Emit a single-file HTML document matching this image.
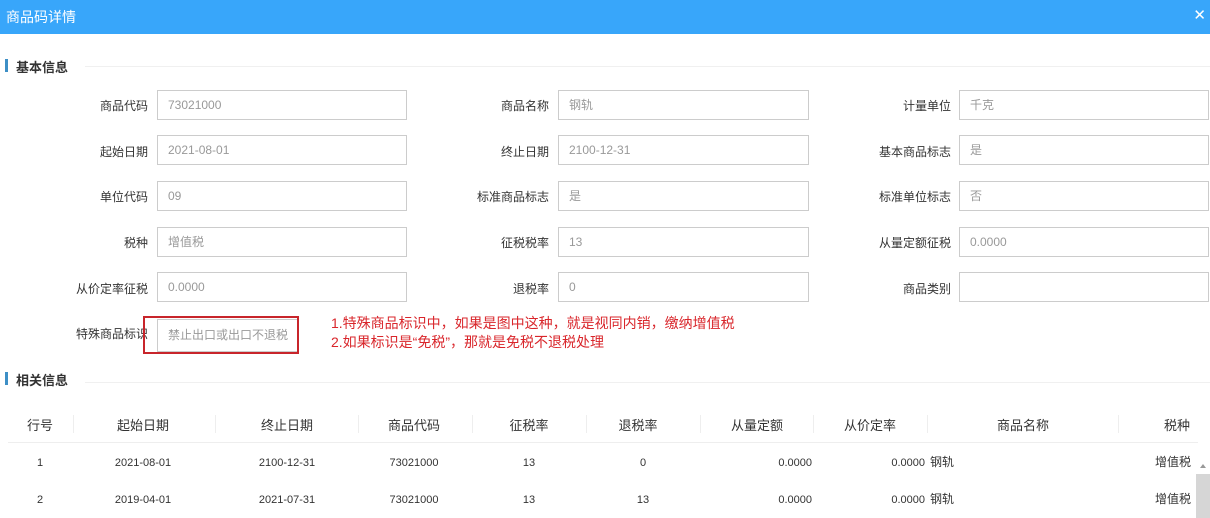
<!DOCTYPE html>
<html><head><meta charset="utf-8"><style>
*{margin:0;padding:0;box-sizing:border-box}
body{width:1210px;height:518px;overflow:hidden;background:#fff;font-family:"Liberation Sans","Noto Sans CJK SC",sans-serif;position:relative;color:#333}
.top{position:absolute;left:0;top:0;width:1210px;height:34px;background:#38a6fa}
.top .t{position:absolute;left:6px;top:7px;color:#fff;font-size:14px}
.top .x{position:absolute;right:4px;top:6px;color:#fff;font-size:15px}
.sec{position:absolute;left:5px;font-size:13px;font-weight:bold;color:#333}
.sec:before{content:"";position:absolute;left:0;top:2px;width:3px;height:13px;background:#3d8fc6}
.sec span{margin-left:11px}
.hl{position:absolute;left:85px;right:0;height:1px;background:#f0f0f0}
.lb{position:absolute;font-size:12px;color:#333;text-align:right;width:140px}
.in{position:absolute;height:30px;border:1px solid #ccc;font-size:12px;color:#999;padding-left:10px;line-height:28px}
.th{position:absolute;top:415px;font-size:13px;color:#333;text-align:center}
.sep{position:absolute;top:415px;width:1px;height:18px;background:#eee}
.td{position:absolute;font-size:11px;color:#333;line-height:14px;height:14px}
.td.c{font-size:12px;top:-1px}
.note{position:absolute;left:331px;color:#d9262b;font-size:14px;line-height:19px}
</style></head><body>
<div class="top"><div class="t">商品码详情</div><div class="x">✕</div></div>
<div class="sec" style="top:57px"><span>基本信息</span></div><div class="hl" style="top:66px"></div>

<div class="lb" style="left:8px;top:97px">商品代码</div><div class="in" style="left:157px;top:90px;width:250px">73021000</div>
<div class="lb" style="left:409px;top:97px">商品名称</div><div class="in" style="left:558px;top:90px;width:251px">钢轨</div>
<div class="lb" style="left:811px;top:97px">计量单位</div><div class="in" style="left:959px;top:90px;width:250px">千克</div>

<div class="lb" style="left:8px;top:143px">起始日期</div><div class="in" style="left:157px;top:135px;width:250px">2021-08-01</div>
<div class="lb" style="left:409px;top:143px">终止日期</div><div class="in" style="left:558px;top:135px;width:251px">2100-12-31</div>
<div class="lb" style="left:811px;top:143px">基本商品标志</div><div class="in" style="left:959px;top:135px;width:250px">是</div>

<div class="lb" style="left:8px;top:188px">单位代码</div><div class="in" style="left:157px;top:181px;width:250px">09</div>
<div class="lb" style="left:409px;top:188px">标准商品标志</div><div class="in" style="left:558px;top:181px;width:251px">是</div>
<div class="lb" style="left:811px;top:188px">标准单位标志</div><div class="in" style="left:959px;top:181px;width:250px">否</div>

<div class="lb" style="left:8px;top:234px">税种</div><div class="in" style="left:157px;top:227px;width:250px">增值税</div>
<div class="lb" style="left:409px;top:234px">征税税率</div><div class="in" style="left:558px;top:227px;width:251px">13</div>
<div class="lb" style="left:811px;top:234px">从量定额征税</div><div class="in" style="left:959px;top:227px;width:250px">0.0000</div>

<div class="lb" style="left:8px;top:280px">从价定率征税</div><div class="in" style="left:157px;top:272px;width:250px">0.0000</div>
<div class="lb" style="left:409px;top:280px">退税率</div><div class="in" style="left:558px;top:272px;width:251px">0</div>
<div class="lb" style="left:811px;top:280px">商品类别</div><div class="in" style="left:959px;top:272px;width:250px"></div>

<div class="lb" style="left:8px;top:325px">特殊商品标识</div><div class="in" style="left:157px;top:319px;width:141px;height:33px;line-height:31px">禁止出口或出口不退税</div>
<div style="position:absolute;left:143px;top:316px;width:156px;height:38px;border:2px solid #c8252b"></div>
<div class="note" style="top:314px">1.特殊商品标识中，如果是图中这种，就是视同内销，缴纳增值税<br>2.如果标识是“免税”，那就是免税不退税处理</div>

<div class="sec" style="top:370px"><span>相关信息</span></div><div class="hl" style="top:382px"></div>

<div class="th" style="left:10px;width:60px">行号</div><div class="sep" style="left:73px"></div>
<div class="th" style="left:93px;width:100px">起始日期</div><div class="sep" style="left:215px"></div>
<div class="th" style="left:237px;width:100px">终止日期</div><div class="sep" style="left:358px"></div>
<div class="th" style="left:364px;width:100px">商品代码</div><div class="sep" style="left:472px"></div>
<div class="th" style="left:479px;width:100px">征税率</div><div class="sep" style="left:586px"></div>
<div class="th" style="left:593px;width:90px">退税率</div><div class="sep" style="left:700px"></div>
<div class="th" style="left:707px;width:100px">从量定额</div><div class="sep" style="left:813px"></div>
<div class="th" style="left:820px;width:100px">从价定率</div><div class="sep" style="left:927px"></div>
<div class="th" style="left:973px;width:100px">商品名称</div><div class="sep" style="left:1118px"></div>
<div class="th" style="left:1140px;width:50px;text-align:right">税种</div>
<div style="position:absolute;left:8px;right:12px;top:442px;height:1px;background:#eee"></div>

<div style="position:absolute;left:0;top:456px;width:1196px;height:14px">
<div class="td" style="left:30px;width:20px;text-align:center">1</div>
<div class="td" style="left:93px;width:100px;text-align:center">2021-08-01</div>
<div class="td" style="left:237px;width:100px;text-align:center">2100-12-31</div>
<div class="td" style="left:364px;width:100px;text-align:center">73021000</div>
<div class="td" style="left:479px;width:100px;text-align:center">13</div>
<div class="td" style="left:598px;width:90px;text-align:center">0</div>
<div class="td" style="left:700px;width:112px;text-align:right">0.0000</div>
<div class="td" style="left:813px;width:112px;text-align:right">0.0000</div>
<div class="td c" style="left:930px">钢轨</div>
<div class="td c" style="left:1120px;width:71px;text-align:right">增值税</div>
</div>
<div style="position:absolute;left:0;top:493px;width:1196px;height:14px">
<div class="td" style="left:30px;width:20px;text-align:center">2</div>
<div class="td" style="left:93px;width:100px;text-align:center">2019-04-01</div>
<div class="td" style="left:237px;width:100px;text-align:center">2021-07-31</div>
<div class="td" style="left:364px;width:100px;text-align:center">73021000</div>
<div class="td" style="left:479px;width:100px;text-align:center">13</div>
<div class="td" style="left:598px;width:90px;text-align:center">13</div>
<div class="td" style="left:700px;width:112px;text-align:right">0.0000</div>
<div class="td" style="left:813px;width:112px;text-align:right">0.0000</div>
<div class="td c" style="left:930px">钢轨</div>
<div class="td c" style="left:1120px;width:71px;text-align:right">增值税</div>
</div>

<div style="position:absolute;left:1200px;top:464px;width:0;height:0;border-left:3px solid transparent;border-right:3px solid transparent;border-bottom:4px solid #999"></div>
<div style="position:absolute;left:1196px;top:474px;width:14px;height:44px;background:#d6d6d6"></div>
</body></html>
